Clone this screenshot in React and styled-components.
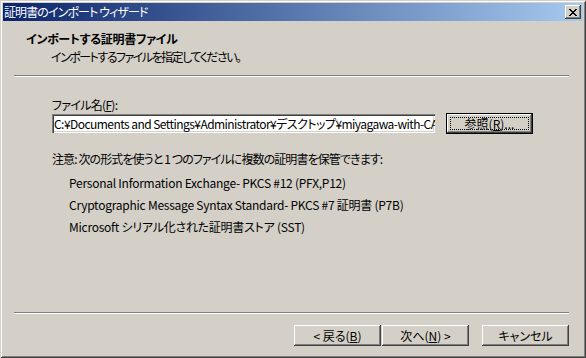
import React from 'react';
import styled, { createGlobalStyle } from 'styled-components';

const Global = createGlobalStyle`
  html, body { margin: 0; padding: 0; background: #d4d0c8; }
  body {
    font-family: "Noto Sans CJK JP", "DejaVu Sans", sans-serif;
    font-size: 12px;
    font-feature-settings: "palt";
    color: #000;
  }
`;

const Window = styled.div`
  box-sizing: border-box;
  width: 586px;
  height: 358px;
  padding: 3px;
  background: #d4d0c8;
  display: flex;
  flex-direction: column;
  box-shadow: inset 1px 1px #d4d0c8, inset -1px -1px #404040,
    inset 2px 2px #fff, inset -2px -2px #808080;
`;

const TitleBar = styled.div`
  height: 18px;
  flex: none;
  display: flex;
  align-items: center;
  justify-content: space-between;
  padding: 0 2px 0 1px;
  background: linear-gradient(to right, #0a246a, #a6caf0);
  color: #fff;
  line-height: 18px;
  letter-spacing: -0.9px;
`;

const CloseBox = styled.div`
  box-sizing: border-box;
  width: 16px;
  height: 14px;
  background: #d4d0c8;
  display: flex;
  align-items: center;
  justify-content: center;
  box-shadow: inset -1px -1px #404040, inset 1px 1px #fff,
    inset -2px -2px #808080;
`;

const Header = styled.div`
  height: 54px;
  flex: none;
  box-sizing: border-box;
  padding: 9px 0 0 23px;
  line-height: 18px;
`;

const HeaderTitle = styled.div`
  font-weight: bold;
  letter-spacing: -0.3px;
`;

const HeaderSub = styled.div`
  padding-left: 25px;
  letter-spacing: -1.5px;
`;

const Rule = styled.div`
  flex: none;
  height: 0;
  border-top: 1px solid #808080;
  border-bottom: 1px solid #fff;
  margin: 0 14px 0 11px;
`;

const Body = styled.div`
  flex: 1;
  padding: 21px 0 0 49px;
`;

const Label = styled.div`
  line-height: 14px;
  letter-spacing: -0.7px;
`;

const FileRow = styled.div`
  margin-top: 1px;
  height: 21px;
  display: flex;
  align-items: center;
  gap: 11px;
`;

const TextBox = styled.div`
  box-sizing: border-box;
  width: 383px;
  height: 19px;
  background: #fff;
  padding: 0 2px;
  line-height: 19px;
  white-space: nowrap;
  overflow: hidden;
  letter-spacing: -0.55px;
  box-shadow: inset 1px 1px #808080, inset 2px 2px #404040,
    inset -1px -1px #fff, inset -2px -2px #d4d0c8;
`;

const Button = styled.button`
  position: relative;
  box-sizing: border-box;
  width: 87px;
  height: 21px;
  padding: 0;
  font: inherit;
  color: #000;
  background: #d4d0c8;
  line-height: 19px;
  border: ${p => (p.$default ? '1px solid #000' : 'none')};
  box-shadow: ${p =>
    p.$default
      ? 'inset -1px -1px #404040, inset 1px 1px #fff, inset -2px -2px #808080'
      : 'inset -1px -1px #404040, inset 1px 1px #fff, inset -2px -2px #808080, inset 2px 2px #d4d0c8'};
  &::after {
    content: '';
    display: ${p => (p.$focus ? 'block' : 'none')};
    position: absolute;
    inset: 3px;
    border: 1px dotted #000;
  }
`;

const Note = styled.div`
  margin-top: 18px;
  line-height: 14px;
  letter-spacing: -0.9px;
`;

const Formats = styled.ul`
  list-style: none;
  margin: 6px 0 0;
  padding: 0 0 0 17px;
  line-height: 22px;
  letter-spacing: -0.25px;
`;

const Footer = styled.div`
  height: 41px;
  flex: none;
  box-sizing: border-box;
  padding: 11px 14px 0 0;
  display: flex;
  justify-content: flex-end;
  gap: 1px;
`;

const Spacer = styled.div`
  width: 11px;
`;

const formats = [
  'Personal Information Exchange- PKCS #12 (PFX,P12)',
  'Cryptographic Message Syntax Standard- PKCS #7 証明書 (P7B)',
  'Microsoft シリアル化された証明書ストア (SST)',
];

export default function App() {
  return (
    <>
      <Global />
      <Window>
        <TitleBar>
          <span>証明書のインポート ウィザード</span>
          <CloseBox>
            <svg width="8" height="7" viewBox="0 0 8 7" shapeRendering="crispEdges">
              <path d="M0 0h2v1h-2zM6 0h2v1h-2zM1 1h2v1h-2zM5 1h2v1h-2zM2 2h4v1h-4zM3 3h2v1h-2zM2 4h4v1h-4zM1 5h2v1h-2zM5 5h2v1h-2zM0 6h2v1h-2zM6 6h2v1h-2z" fill="#000" />
            </svg>
          </CloseBox>
        </TitleBar>
        <Header>
          <HeaderTitle>インポートする証明書ファイル</HeaderTitle>
          <HeaderSub>インポートするファイルを指定してください。</HeaderSub>
        </Header>
        <Rule />
        <Body>
          <Label>ファイル名(<u>F</u>):</Label>
          <FileRow>
            <TextBox>C:¥Documents and Settings¥Administrator¥デスクトップ¥miyagawa-with-CA.pfx</TextBox>
            <Button $default $focus>参照(<u>R</u>)...</Button>
          </FileRow>
          <Note>注意: 次の形式を使うと 1 つのファイルに複数の証明書を保管できます:</Note>
          <Formats>
            {formats.map(f => (
              <li key={f}>{f}</li>
            ))}
          </Formats>
        </Body>
        <Rule />
        <Footer>
          <Button>&lt; 戻る(<u>B</u>)</Button>
          <Button>次へ(<u>N</u>) &gt;</Button>
          <Spacer />
          <Button>キャンセル</Button>
        </Footer>
      </Window>
    </>
  );
}
